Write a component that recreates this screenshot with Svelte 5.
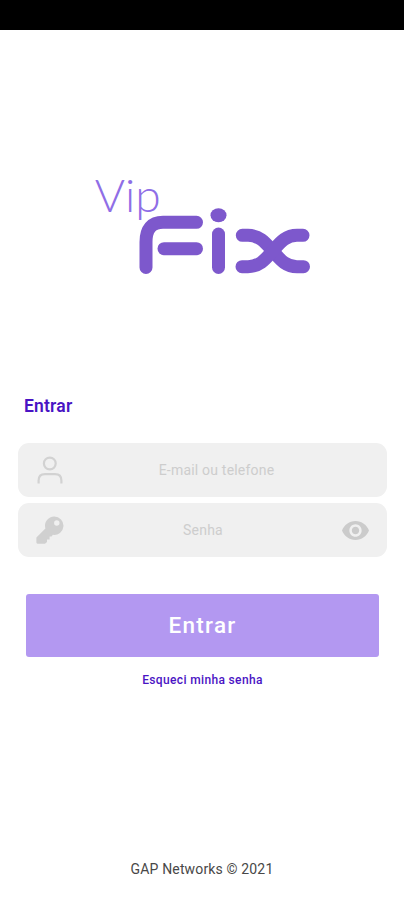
<script lang="ts">
	let user = '';
	let password = '';
	let showPassword = false;
</script>

<div class="screen">
	<div class="status-bar"></div>

	<svg class="logo" width="245" height="125" viewBox="0 0 245 125">
		<text class="vip" x="14.8" y="47.3" textLength="66" lengthAdjust="spacingAndGlyphs">Vip</text>
		<g fill="none" stroke="#7d58cc" stroke-width="13" stroke-linecap="round">
			<path d="M66 102.5V77Q66 57.3 83 57.3H116.5" />
			<path d="M84 83.7H116.5" />
			<path d="M138.5 69V102.5" />
			<path d="M162.3 70.3H168C180 70.3 186 78.5 192.7 86S205 101.7 217 101.7H223.5" />
			<path d="M162 101.7H168C180 101.7 186 93.5 192.7 86S205 70.3 217 70.3H223" />
		</g>
		<ellipse cx="138.5" cy="50.3" rx="8" ry="7" fill="#7d58cc" />
	</svg>

	<h1>Entrar</h1>

	<form on:submit|preventDefault>
		<label class="field">
			<svg width="28" height="30" viewBox="0 0 28 30" fill="none" stroke="#d2d2d2" stroke-width="2.2">
				<circle cx="13.8" cy="8.5" r="5.9" />
				<path d="M2.6 28.5V25.5Q2.6 19.2 9 19.2H19Q25.4 19.2 25.4 25.5V28.5" />
			</svg>
			<input type="text" placeholder="E-mail ou telefone" bind:value={user} />
		</label>
		<label class="field">
			<svg width="28" height="30" viewBox="0 0 28 30" fill="#d0d0d0">
				<path
					fill-rule="evenodd"
					d="M18.3 1.5a9.2 9.2 0 1 1-1.4 18.3L15.6 21.6H13.6V24.5H11V27L9 28.7H1.5Q.4 28.7.4 27.6V22.6L9.4 13.4A9.2 9.2 0 0 1 18.3 1.5ZM20.8 5.3a2.7 2.7 0 1 0 0 5.4a2.7 2.7 0 0 0 0-5.4Z"
				/>
			</svg>
			{#if showPassword}
				<input type="text" placeholder="Senha" bind:value={password} />
			{:else}
				<input type="password" placeholder="Senha" bind:value={password} />
			{/if}
			<button
				class="toggle"
				type="button"
				aria-label="Mostrar senha"
				on:click={() => (showPassword = !showPassword)}
			>
				<svg width="27" height="19" viewBox="1 4.5 22 15" preserveAspectRatio="none" fill="#cbcbcb">
					<path
						d="M12 4.5C7 4.5 2.73 7.61 1 12c1.73 4.39 6 7.5 11 7.5s9.27-3.11 11-7.5c-1.73-4.39-6-7.5-11-7.5zM12 17c-2.76 0-5-2.24-5-5s2.24-5 5-5 5 2.24 5 5-2.24 5-5 5zm0-8c-1.66 0-3 1.34-3 3s1.34 3 3 3 3-1.34 3-3-1.34-3-3-3z"
					/>
				</svg>
			</button>
		</label>
		<button class="submit" type="submit">Entrar</button>
	</form>

	<button class="forgot" type="button">Esqueci minha senha</button>

	<footer>GAP Networks © 2021</footer>
</div>

<style>
	:global(body) {
		margin: 0;
		background: #fff;
	}

	.screen {
		display: flex;
		flex-direction: column;
		height: 900px;
		font-family: Roboto, sans-serif;
		background: #fff;
	}

	.status-bar {
		flex: none;
		height: 30px;
		background: #000;
	}

	.logo {
		flex: none;
		margin: 135px 0 0 80px;
	}

	.vip {
		font-family: Lato, sans-serif;
		font-size: 45px;
		font-weight: 300;
		fill: #8f6ee6;
	}

	h1 {
		margin: 105px 0 0 24px;
		font-size: 17.5px;
		line-height: 22px;
		font-weight: 600;
		letter-spacing: 0.2px;
		color: #4a14c4;
	}

	form {
		display: flex;
		flex-direction: column;
		gap: 6px;
		margin: 26px 17px 0 18px;
	}

	.field {
		display: flex;
		align-items: center;
		box-sizing: border-box;
		height: 54px;
		padding: 0 18px;
		border-radius: 11px;
		background: #f0f0f0;
	}

	.field svg {
		flex: none;
	}

	.field input {
		flex: 1;
		min-width: 0;
		padding: 0;
		border: none;
		outline: none;
		background: transparent;
		font-family: inherit;
		font-size: 14px;
		letter-spacing: 0.2px;
		text-align: center;
		color: #555;
	}

	.field input::placeholder {
		color: #cdcdcd;
	}

	button {
		padding: 0;
		border: none;
		background: none;
		font-family: inherit;
		cursor: pointer;
	}

	.toggle {
		display: flex;
	}

	.submit {
		height: 63px;
		margin: 31px 8px 0;
		padding-bottom: 2px;
		border-radius: 3px;
		background: #b398f1;
		font-size: 22.5px;
		font-weight: 500;
		letter-spacing: 1.3px;
		color: #fff;
	}

	.forgot {
		align-self: center;
		margin-top: 15px;
		padding-left: 1px;
		font-size: 12px;
		line-height: 16px;
		font-weight: 500;
		letter-spacing: 0.35px;
		color: #4a14c4;
	}

	footer {
		margin-top: auto;
		padding-bottom: 21px;
		font-size: 14px;
		line-height: 20px;
		letter-spacing: 0.15px;
		text-align: center;
		color: #484848;
	}
</style>
